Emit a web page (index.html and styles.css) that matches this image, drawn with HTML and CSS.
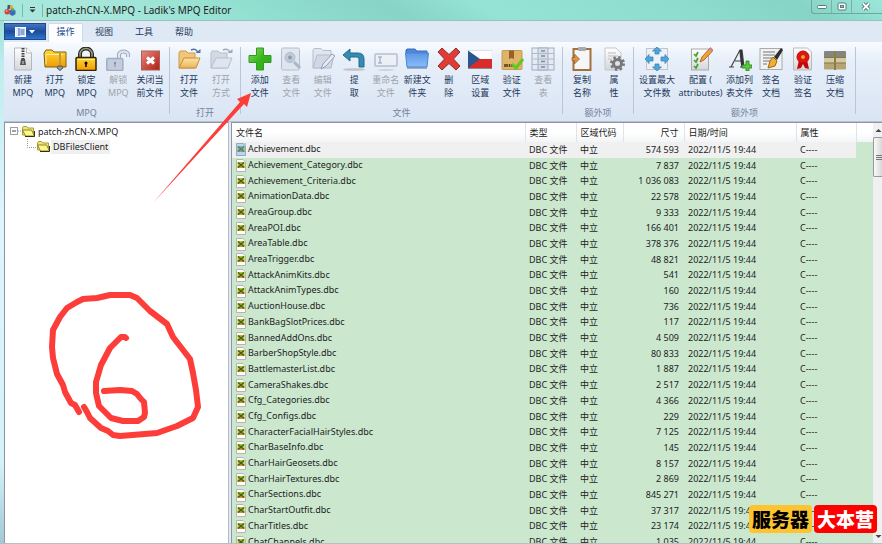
FILE: index.html
```html
<!DOCTYPE html>
<html lang="zh-CN">
<head>
<meta charset="utf-8">
<title>patch-zhCN-X.MPQ - Ladik's MPQ Editor</title>
<link rel="stylesheet" href="styles.css">
</head>
<body>
<svg class="defs" aria-hidden="true">
  <defs>
    <linearGradient id="gold" x1="0" y1="0" x2="0" y2="1"><stop offset="0" stop-color="#ffd83c"/><stop offset="1" stop-color="#f09a00"/></linearGradient>
    <linearGradient id="paper" x1="0" y1="0" x2="0" y2="1"><stop offset="0" stop-color="#fff"/><stop offset="1" stop-color="#d4d6da"/></linearGradient>
    <linearGradient id="red" x1="0" y1="0" x2="1" y2="1"><stop offset="0" stop-color="#e88a7c"/><stop offset="1" stop-color="#b01c14"/></linearGradient>
    <linearGradient id="blue" x1="0" y1="0" x2="0" y2="1"><stop offset="0" stop-color="#5b96e6"/><stop offset="1" stop-color="#8abcf8"/></linearGradient>
    <linearGradient id="green" x1="0" y1="0" x2="1" y2="1"><stop offset="0" stop-color="#90dc70"/><stop offset=".5" stop-color="#38b81c"/><stop offset="1" stop-color="#2ca810"/></linearGradient>
    <linearGradient id="tan" x1="0" y1="0" x2="0" y2="1"><stop offset="0" stop-color="#fbe3a4"/><stop offset="1" stop-color="#eab55c"/></linearGradient>
    <symbol id="dbc" viewBox="0 0 10 13"><path d="M.5.5h6.500l2.500 2.500v9.500h-9z" fill="#fff" stroke="#b9b3a8"/><path d="M1.500 3h7v6h-7z" fill="#b5bf28"/><path d="M1.500 7h7v2h-7z" fill="#d8922c"/><path d="M2 3.500l6 5M8 3.500l-6 5" stroke="#35631c" stroke-width="1.300"/></symbol>
    <symbol id="folder" viewBox="0 0 13 11"><path d="M.5 9V2l1-1.500h3L6 2h5.500v7z" fill="#f2e66e" stroke="#a39d3d"/><path d="M.5 4h9l3 6h-9z" fill="#fff68c" stroke="#8a8530"/><path d="M3 10.500h9.500V5" fill="none" stroke="#33310c"/></symbol>
  </defs>
</svg>

<div class="window">
  <header class="titlebar">
    <svg class="logo" viewBox="0 0 13 13"><path d="M4 1.500l3-1 3 2-1 4-4-1z" fill="#e2ab38"/><path d="M4 1l2.500 0v4l-3 1z" fill="#36558e"/><circle cx="3.500" cy="8.500" r="3" fill="#d9413a"/><path d="M6 7l3-1.500 3.500 1.500v4L9 13l-3-2z" fill="#3d6db9"/><path d="M8 4.500l3 .5v3l-3-1z" fill="#53a846"/><circle cx="2.800" cy="7.500" r="1" fill="#ff9c8c"/></svg>
    <span class="bar"></span>
    <button class="quick" aria-label="自定义快速访问工具栏"><svg viewBox="0 0 7 6"><path d="M1 .5h5" stroke="#333"/><path d="M.5 2.500h6L3.500 5.500z" fill="#333"/></svg></button>
    <span class="bar"></span>
    <h1>patch-zhCN-X.MPQ - Ladik's MPQ Editor</h1>
    <div class="winbuttons">
      <button aria-label="最小化"><svg viewBox="0 0 10 9"><rect x=".5" y="3.500" width="9" height="3" rx="1" fill="#fff" stroke="#557d78"/></svg></button>
      <button aria-label="最大化"><svg viewBox="0 0 10 9"><rect x="1" y="1" width="8" height="7" rx="1" fill="#fff" stroke="#557d78"/><rect x="3.500" y="3.500" width="3" height="2" fill="#8ccfc2" stroke="#557d78"/></svg></button>
      <button aria-label="关闭"><svg viewBox="0 0 10 9"><path d="M2 1.500l6 6M8 1.500l-6 6" stroke="#4e6d6a" stroke-width="3.600"/><path d="M2 1.500l6 6M8 1.500l-6 6" stroke="#fff" stroke-width="1.800"/></svg></button>
    </div>
  </header>

  <nav class="tabs">
    <button class="app" aria-label="菜单"><svg viewBox="0 0 21 10"><rect x=".5" y=".5" width="10" height="9" fill="#dcebff" stroke="#fff"/><path d="M4 1v8M5.500 3h4M5.500 5h4M5.500 7h4" stroke="#3465ae"/><path d="M14 3h6l-3 3.500z" fill="#fff"/></svg></button>
    <button class="tab active">操作</button>
    <button class="tab">视图</button>
    <button class="tab">工具</button>
    <button class="tab">帮助</button>
  </nav>

  <section class="ribbon">
    <div class="group g-mpq">
      <div class="tools">
        <button><svg viewBox="0 0 24 24"><path d="M3.500 1h12l5 5v17h-17z" fill="url(#paper)" stroke="#b4b8bd"/><path d="M15.500 1v5h5" fill="#fff" stroke="#b4b8bd"/><path d="M12 1v13" stroke="#444" stroke-width="3" stroke-dasharray="1.500 1"/><path d="M10 12h4l1 6h-6z" fill="#555"/><path d="M12 14v3" stroke="#ddd"/></svg><span>新建<br>MPQ</span></button>
        <button><svg viewBox="0 0 24 24"><path d="M2 20L1 6l2-3h6l2 2h12v15z" fill="url(#gold)" stroke="#7f6210"/><path d="M3 7.500h17M3 7.500v10" stroke="#ffef8b" fill="none"/><path d="M17 5v14" stroke="#745608" stroke-width="2"/><path d="M17 5v14" stroke="#ffe574"/><path d="M15 19h4l1 2-3 2.500L14 21z" fill="#9b9b8d" stroke="#555"/></svg><span>打开<br>MPQ</span></button>
        <button><svg viewBox="0 0 24 24"><path d="M6 12V7a6 5.500 0 0 1 12 0v5" fill="none" stroke="#29291f" stroke-width="4"/><path d="M6 12V7a6 5.500 0 0 1 12 0v5" fill="none" stroke="#999987" stroke-width="1.500"/><rect x="2" y="10.500" width="20" height="13" rx="1" fill="url(#gold)" stroke="#302204" stroke-width="1.500"/><path d="M3.500 12.500h17" stroke="#fff27c"/><circle cx="12" cy="16" r="1.500"/><path d="M12 16v4" stroke="#000" stroke-width="1.500"/></svg><span>锁定<br>MPQ</span></button>
        <button disabled><svg viewBox="0 0 24 24"><path d="M13 12V7a5 4.500 0 0 1 9 0v3" fill="none" stroke="#8592a8" stroke-width="4"/><path d="M13 12V7a5 4.500 0 0 1 9 0v3" fill="none" stroke="#dce2ec" stroke-width="2"/><rect x=".8" y="11.500" width="16" height="12" rx="1" fill="#b7c2d4" stroke="#8c99ae" stroke-width="1.500"/><circle cx="9" cy="16" r="1.200" fill="#63728b"/><path d="M9 16v4" stroke="#63728b"/></svg><span>解锁<br>MPQ</span></button>
        <button><svg viewBox="0 0 24 24"><rect x="3.500" y="4" width="18" height="19" fill="url(#red)" stroke="#a96058"/><path d="M9 10.500l7 6M16 10.500l-7 6" stroke="#fff" stroke-width="3"/></svg><span>关闭当<br>前文件</span></button>
      </div>
      <h2>MPQ</h2>
    </div>
    <div class="group g-open">
      <div class="tools">
        <button><svg viewBox="0 0 24 24"><path d="M2 21V6l1-2h6l2 2h7v15z" fill="#efc67b" stroke="#d19b42"/><path d="M2 21L7 11h16l-4 10z" fill="url(#tan)" stroke="#c98e32"/><path d="M14 3c4-2 6 0 7 3" fill="none" stroke="#55779e" stroke-width="1.500"/><path d="M18.500 6h5v-4z" fill="#55779e"/></svg><span>打开<br>文件</span></button>
        <button disabled><svg viewBox="0 0 24 24"><path d="M2 21V6l1-2h6l2 2h7v15z" fill="#cbd2de" stroke="#a5afbf"/><path d="M2 21L7 11h16l-4 10z" fill="#dde3ec" stroke="#a5afbf"/><path d="M14 3c4-2 6 0 7 3" fill="none" stroke="#8390a5" stroke-width="1.500"/><path d="M18.500 6h5v-4z" fill="#8390a5"/></svg><span>打开<br>方式</span></button>
      </div>
      <h2>打开</h2>
    </div>
    <div class="group g-file">
      <div class="tools">
        <button><svg viewBox="0 0 24 24"><path d="M8.500 1h7v7.500H23v7h-7.500V23h-7v-7.500H1v-7h7.500z" fill="url(#green)" stroke="#329a24"/></svg><span>添加<br>文件</span></button>
        <button disabled><svg viewBox="0 0 24 24"><rect x="2.500" y="1" width="18" height="22" rx="1.500" fill="#dde3ec" stroke="#a4aec0"/><circle cx="11" cy="10.500" r="5" fill="#b3bdcd" stroke="#9ca8ba"/><circle cx="11" cy="10.500" r="2" fill="#707e96"/><path d="M15 15l6 6" stroke="#98a4b8" stroke-width="3"/></svg><span>查看<br>文件</span></button>
        <button disabled><svg viewBox="0 0 24 24"><path d="M2 21V3l1-1.500h7l2 2h8v17z" fill="#dce2eb" stroke="#a4aec0"/><path d="M2 21L6 8h17l-3 13z" fill="#cad1de" stroke="#a4aec0"/><path d="M10 22l2-5L21 7l3 2-9 10z" fill="#e8ecf2" stroke="#78869e"/></svg><span>编辑<br>文件</span></button>
        <button><svg viewBox="0 0 24 24"><ellipse cx="12" cy="22.500" rx="11" ry="1.300" fill="#bfc3c9"/><path d="M8 2v4h8q6 0 6 6v8h-5v-8q0-2-2-2H8v4L1 8z" fill="#348db0" stroke="#246b8a"/></svg><span>提<br>取</span></button>
        <button disabled><svg viewBox="0 0 24 24"><ellipse cx="12" cy="23" rx="8" ry="1" fill="#c0cedc"/><rect x="1" y="7" width="22" height="12" rx="1" fill="#edf1f7" stroke="#a3afc2" stroke-width="1.500"/><path d="M4 10h4M6 10v6M4 16h4" stroke="#76859c"/></svg><span>重命名<br>文件</span></button>
        <button><svg viewBox="0 0 24 24"><path d="M1 8V3l1-1h8l2 2h10v4z" fill="#4e87d9" stroke="#3a6fb9"/><path d="M.5 6h23L22 20H2z" fill="url(#blue)" stroke="#4b85d0"/><path d="M2 21h20" stroke="#4e719e"/></svg><span>新建文<br>件夹</span></button>
        <button><svg viewBox="0 0 24 24"><path d="M1 5l4-4 7 6.500L19 1l4 4-6.500 7L23 19l-4 4-7-6.500L5 23l-4-4 6.500-7z" fill="#e03b35" stroke="#8d3029"/></svg><span>删<br>除</span></button>
        <button><svg viewBox="0 0 24 24"><path d="M0 3.500h24v9H0z" fill="#fff" stroke="#c8c8c8" stroke-width=".5"/><path d="M0 12h24v9H0z" fill="#d92b2a"/><path d="M0 3.500L12 12 0 21z" fill="#285690"/><path d="M0 21.500h24" stroke="#8a8a8a"/></svg><span>区域<br>设置</span></button>
        <button><svg viewBox="0 0 24 24"><rect x="2" y="3.500" width="20" height="19" rx="1" fill="#deb469" stroke="#c49b50"/><path d="M9 3.500h5V12l-2.500-1L9 12z" fill="#94602b"/><path d="M5 17v3M7 17v3M9.500 17v3M12 17v3" stroke="#4e3919" stroke-width="1.500"/><path d="M12 17l4 4 7-9" fill="none" stroke="#63c623" stroke-width="3"/></svg><span>验证<br>文件</span></button>
        <button disabled><svg viewBox="0 0 24 24"><rect x="1" y="1" width="22" height="22" fill="#e7ebf2" stroke="#8997ad"/><path d="M7 1h10v22H7z" fill="#d1d8e3" stroke="#8997ad"/><path d="M1 6.500h22M1 12h22M1 17.500h22" stroke="#9ba8bb"/><path d="M10 4h4M10 9h4M10 14.500h4M10 20h4" stroke="#586a86" stroke-width="1.500"/></svg><span>查看<br>表</span></button>
      </div>
      <h2>文件</h2>
    </div>
    <div class="group g-copy">
      <div class="tools">
        <button><svg viewBox="0 0 24 24"><rect x="3.500" y="2" width="17" height="21" fill="#f5f6f8" stroke="#a3713d" stroke-width="2"/><rect x="8" y="0" width="8" height="4" rx="1" fill="#a7aab0"/><path d="M2 10.500h2.500v-3.500l5 5-5 5v-3.500H2z" fill="#dc9247" stroke="#935a24" stroke-width=".7"/></svg><span>复制<br>名称</span></button>
        <button><svg viewBox="0 0 24 24"><path d="M3 1h11l5 5v17H3z" fill="url(#paper)" stroke="#c5c7ca"/><path d="M6 6h8M6 9h10M6 12h4" stroke="#bbb"/><circle cx="15.500" cy="16.500" r="4" fill="none" stroke="#77797d" stroke-width="3"/><circle cx="15.500" cy="16.500" r="6" fill="none" stroke="#77797d" stroke-width="3" stroke-dasharray="2.350 2.360"/></svg><span>属<br>性</span></button>
      </div>
      <h2>额外项</h2>
    </div>
    <div class="group g-extra">
      <div class="tools">
        <button><svg viewBox="0 0 24 24"><rect x="1.500" y="1.500" width="21" height="21" fill="#edf0f5" stroke="#bfc4ce"/><path d="M12 0l4.500 4h-2.500v3h-4V4H7.500zM12 24l4.500-4h-2.500v-3h-4v3H7.500zM0 12l4-4.500V10h4v4H4v2.500zM24 12l-4-4.500V10h-4v4h4v2.500z" fill="#4da5dd" stroke="#2d80b8" stroke-width=".7"/></svg><span>设置最大<br>文件数</span></button>
        <button><svg viewBox="0 0 24 24"><rect x="2.500" y="2" width="17" height="21" fill="url(#paper)" stroke="#aaa"/><path d="M5 7l2 2 2-4M5 13l2 2 2-4M5 19l2 2 2-4" fill="none" stroke="#47a12e" stroke-width="1.700"/><path d="M11 15l2-5L21 1l3 2.500L15 13z" fill="#f1a238" stroke="#b66f20"/><path d="M20 2l1.500-2L24 2.500 22.500 4.500z" fill="#c87fb4"/></svg><span>配置 (<br>attributes)</span></button>
        <button><svg viewBox="0 0 24 24"><path d="M3 20L12 3h2l2 17M7 14h8M1 20h5M12 20h6" fill="none" stroke="#444" stroke-width="1.200"/><path d="M12.500 3l2 16.500" stroke="#333" stroke-width="2.600"/><path d="M18 14h3v4h3v3h-3v3h-3v-3h-4v-3h4z" fill="#5bc83d" stroke="#258218" stroke-width=".8"/></svg><span>添加列<br>表文件</span></button>
        <button><svg viewBox="0 0 24 24"><rect x="1" y="1.500" width="22" height="21" fill="#f0f1f2" stroke="#aaa"/><path d="M4 5h12M4 8h12M4 11h9M4 14h7M4 17h4" stroke="#777"/><path d="M22 1l2 2-6 10-3-3z" fill="#2c2e32"/><path d="M14 10l4 4-2 5-7 2 2-7z" fill="#efb12f" stroke="#9b6815"/></svg><span>签名<br>文档</span></button>
        <button><svg viewBox="0 0 24 24"><path d="M2.500 1h14l4 4v18h-18z" fill="url(#paper)" stroke="#bbb"/><path d="M8 13l-2 9 4-1 2-4 2 4 4 1-2-9z" fill="#c40808"/><circle cx="12" cy="10" r="6" fill="#e41414" stroke="#bf0a0a"/><circle cx="12" cy="10" r="2.500" fill="#f6a21f" stroke="#b3200f"/></svg><span>验证<br>签名</span></button>
        <button><svg viewBox="0 0 24 24"><rect x="1" y="4" width="22" height="7" rx="1" fill="#85857e"/><rect x="1" y="10" width="22" height="7" fill="#d5ca9a"/><rect x="1" y="16" width="22" height="6.500" rx="1" fill="#b5a474"/><path d="M1 10.500h22M1 16h22" stroke="#7d775c"/><path d="M12 4v19" stroke="#8f7c48" stroke-width="2"/></svg><span>压缩<br>文档</span></button>
      </div>
      <h2>额外项</h2>
    </div>
  </section>

  <main class="content">
    <aside class="tree">
      <div class="node"><svg class="toggle" viewBox="0 0 12 9"><rect x=".5" y=".5" width="7" height="7" fill="#fff" stroke="#9aa0a8"/><path d="M2 4h4" stroke="#445"/><path d="M8 4h4" stroke="#999" stroke-dasharray="1 1"/></svg><svg class="folder"><use href="#folder"/></svg><span>patch-zhCN-X.MPQ</span></div>
      <div class="node child"><svg class="branch" viewBox="0 0 10 15"><path d="M.5 0v8.500H10" fill="none" stroke="#999" stroke-dasharray="1 1"/></svg><svg class="folder"><use href="#folder"/></svg><span class="current">DBFilesClient</span></div>
    </aside>
    <div class="list">
      <table>
        <colgroup><col class="c-name"><col class="c-type"><col class="c-locale"><col class="c-size"><col class="c-date"><col class="c-attr"><col class="c-rest"></colgroup>
        <thead><tr><th>文件名</th><th>类型</th><th>区域代码</th><th class="num">尺寸</th><th>日期/时间</th><th>属性</th><th class="rest"></th></tr></thead>
        <tbody>
          <tr class="selected"><td><svg><use href="#dbc"/><rect width="10" height="13" fill="#5fa3e6" opacity=".45"/></svg>Achievement.dbc</td><td>DBC 文件</td><td>中立</td><td class="num">574 593</td><td>2022/11/5 19:44</td><td>C----</td><td class="rest"></td></tr>
          <tr><td><svg><use href="#dbc"/></svg>Achievement_Category.dbc</td><td>DBC 文件</td><td>中立</td><td class="num">7 837</td><td>2022/11/5 19:44</td><td>C----</td><td></td></tr>
          <tr><td><svg><use href="#dbc"/></svg>Achievement_Criteria.dbc</td><td>DBC 文件</td><td>中立</td><td class="num">1 036 083</td><td>2022/11/5 19:44</td><td>C----</td><td></td></tr>
          <tr><td><svg><use href="#dbc"/></svg>AnimationData.dbc</td><td>DBC 文件</td><td>中立</td><td class="num">22 578</td><td>2022/11/5 19:44</td><td>C----</td><td></td></tr>
          <tr><td><svg><use href="#dbc"/></svg>AreaGroup.dbc</td><td>DBC 文件</td><td>中立</td><td class="num">9 333</td><td>2022/11/5 19:44</td><td>C----</td><td></td></tr>
          <tr><td><svg><use href="#dbc"/></svg>AreaPOI.dbc</td><td>DBC 文件</td><td>中立</td><td class="num">166 401</td><td>2022/11/5 19:44</td><td>C----</td><td></td></tr>
          <tr><td><svg><use href="#dbc"/></svg>AreaTable.dbc</td><td>DBC 文件</td><td>中立</td><td class="num">378 376</td><td>2022/11/5 19:44</td><td>C----</td><td></td></tr>
          <tr><td><svg><use href="#dbc"/></svg>AreaTrigger.dbc</td><td>DBC 文件</td><td>中立</td><td class="num">48 821</td><td>2022/11/5 19:44</td><td>C----</td><td></td></tr>
          <tr><td><svg><use href="#dbc"/></svg>AttackAnimKits.dbc</td><td>DBC 文件</td><td>中立</td><td class="num">541</td><td>2022/11/5 19:44</td><td>C----</td><td></td></tr>
          <tr><td><svg><use href="#dbc"/></svg>AttackAnimTypes.dbc</td><td>DBC 文件</td><td>中立</td><td class="num">160</td><td>2022/11/5 19:44</td><td>C----</td><td></td></tr>
          <tr><td><svg><use href="#dbc"/></svg>AuctionHouse.dbc</td><td>DBC 文件</td><td>中立</td><td class="num">736</td><td>2022/11/5 19:44</td><td>C----</td><td></td></tr>
          <tr><td><svg><use href="#dbc"/></svg>BankBagSlotPrices.dbc</td><td>DBC 文件</td><td>中立</td><td class="num">117</td><td>2022/11/5 19:44</td><td>C----</td><td></td></tr>
          <tr><td><svg><use href="#dbc"/></svg>BannedAddOns.dbc</td><td>DBC 文件</td><td>中立</td><td class="num">4 509</td><td>2022/11/5 19:44</td><td>C----</td><td></td></tr>
          <tr><td><svg><use href="#dbc"/></svg>BarberShopStyle.dbc</td><td>DBC 文件</td><td>中立</td><td class="num">80 833</td><td>2022/11/5 19:44</td><td>C----</td><td></td></tr>
          <tr><td><svg><use href="#dbc"/></svg>BattlemasterList.dbc</td><td>DBC 文件</td><td>中立</td><td class="num">1 887</td><td>2022/11/5 19:44</td><td>C----</td><td></td></tr>
          <tr><td><svg><use href="#dbc"/></svg>CameraShakes.dbc</td><td>DBC 文件</td><td>中立</td><td class="num">2 517</td><td>2022/11/5 19:44</td><td>C----</td><td></td></tr>
          <tr><td><svg><use href="#dbc"/></svg>Cfg_Categories.dbc</td><td>DBC 文件</td><td>中立</td><td class="num">4 366</td><td>2022/11/5 19:44</td><td>C----</td><td></td></tr>
          <tr><td><svg><use href="#dbc"/></svg>Cfg_Configs.dbc</td><td>DBC 文件</td><td>中立</td><td class="num">229</td><td>2022/11/5 19:44</td><td>C----</td><td></td></tr>
          <tr><td><svg><use href="#dbc"/></svg>CharacterFacialHairStyles.dbc</td><td>DBC 文件</td><td>中立</td><td class="num">7 125</td><td>2022/11/5 19:44</td><td>C----</td><td></td></tr>
          <tr><td><svg><use href="#dbc"/></svg>CharBaseInfo.dbc</td><td>DBC 文件</td><td>中立</td><td class="num">145</td><td>2022/11/5 19:44</td><td>C----</td><td></td></tr>
          <tr><td><svg><use href="#dbc"/></svg>CharHairGeosets.dbc</td><td>DBC 文件</td><td>中立</td><td class="num">8 157</td><td>2022/11/5 19:44</td><td>C----</td><td></td></tr>
          <tr><td><svg><use href="#dbc"/></svg>CharHairTextures.dbc</td><td>DBC 文件</td><td>中立</td><td class="num">2 869</td><td>2022/11/5 19:44</td><td>C----</td><td></td></tr>
          <tr><td><svg><use href="#dbc"/></svg>CharSections.dbc</td><td>DBC 文件</td><td>中立</td><td class="num">845 271</td><td>2022/11/5 19:44</td><td>C----</td><td></td></tr>
          <tr><td><svg><use href="#dbc"/></svg>CharStartOutfit.dbc</td><td>DBC 文件</td><td>中立</td><td class="num">37 317</td><td>2022/11/5 19:44</td><td>C----</td><td></td></tr>
          <tr><td><svg><use href="#dbc"/></svg>CharTitles.dbc</td><td>DBC 文件</td><td>中立</td><td class="num">23 174</td><td>2022/11/5 19:44</td><td>C----</td><td></td></tr>
          <tr><td><svg><use href="#dbc"/></svg>ChatChannels.dbc</td><td>DBC 文件</td><td>中立</td><td class="num">1 035</td><td>2022/11/5 19:44</td><td>C----</td><td></td></tr>
        </tbody>
      </table>
    </div>
    <div class="scrollbar">
      <svg class="arrow" viewBox="0 0 9 14"><path d="M2.500 9L5.500 6l3 3z" fill="#444"/></svg>
      <div class="thumb"><i></i><i></i><i></i></div>
      <svg class="arrow last" viewBox="0 0 9 14"><path d="M2.500 6h6l-3 3z" fill="#444"/></svg>
    </div>
  </main>
</div>

<svg class="marks" viewBox="0 0 882 544" aria-hidden="true">
  <path d="M153 203L240 102l-3-3 14-6-4 14-3-3z" fill="#fd3d39"/>
  <path d="M79 412L75 405 71 403 65 392 63 385 57 374 53 358 52 347 53 330 60 317 67 308 77 302 83 299 97 298 110 295H130L137 298 150 311 167 324 173 337 190 359 193 373 196 390 198 407 193 418 177 426 157 433 120 436 113 435 108 431 101 428 90 418 87 412 84 407M126 338L125 337 121 337 110 348 101 365 96 382V393L99 406 111 418 123 421H138L144 417 145 413 144 402 141 399 137 394 132 391 120 390 104 391" fill="none" stroke="#fd3d39" stroke-width="6" stroke-linecap="round" stroke-linejoin="round"/>
</svg>
<div class="watermark"><span class="yellow">服务器</span><span class="crimson">大本营</span></div>
</body>
</html>
```
FILE: styles.css
```css
* { box-sizing: border-box; }
html, body { height: 100%; margin: 0; }
body {
  position: relative;
  overflow: hidden;
  background: #fff;
  color: #222;
  font: 9px/12px "Noto Sans", "Noto Sans CJK SC", sans-serif;
}
button {
  margin: 0;
  padding: 0;
  border: 0;
  background: none;
  color: inherit;
  font: inherit;
}
svg { display: block; flex: none; }
.defs { position: absolute; width: 0; height: 0; }

.window {
  display: flex;
  flex-direction: column;
  height: 100%;
  padding-left: 4px;
  border-bottom: 1px solid #b8bfc0;
  background: linear-gradient(#8edccb, #c0ecf0 12%, #def5fb 40%, #d4f2f9 85%, #a4c8d6);
}

.titlebar {
  display: flex;
  align-items: center;
  gap: 6px;
  height: 21px;
  margin-left: -4px;
  padding-left: 4px;
  border-bottom: 1px solid #97c3bf;
  background: linear-gradient(30deg, #a8e8dc 0 12%, #91dfd0 30%, #88d4c7 45%, #95e3d5 55%, #8fddcf 75%, #86d4c6 90%, #9ce6da);
}
.logo { width: 12px; height: 12px; }
.bar { width: 1px; height: 13px; background: #7ab8ae; }
.quick svg { width: 7px; height: 6px; }
h1 { margin: 0 auto 0 -3px; color: #222; font-size: 10px; font-weight: 400; line-height: 20px; }
.winbuttons { display: flex; align-self: flex-start; height: 14px; border: 1px solid #6da79f; border-width: 0 0 1px 1px; border-radius: 0 0 0 3px; }
.winbuttons button { display: grid; place-items: center; width: 20px; height: 13px; border-right: 1px solid #78b3aa; }
.winbuttons button:last-child { width: 30px; border: 0; padding-right: 3px; }
.winbuttons svg { width: 10px; height: 9px; }

.tabs { display: flex; align-items: flex-end; height: 21px; background: #dfe8f5; color: #1e395b; }
.app { display: grid; place-items: center; align-self: center; width: 42px; height: 17px; border: 1px solid #1c4a8c; background: linear-gradient(#4077c0, #1c4c9b 50%, #2f75cc); }
.app svg { width: 21px; height: 10px; }
.tab { width: 40px; height: 19px; padding-bottom: 2px; }
.tab.active { width: 35px; margin: 0 1px 0 2px; border: 1px solid #cfd9e8; border-bottom: 0; border-radius: 2px 2px 0 0; background: #fbfdff; color: #1c4a8c; }

.ribbon {
  display: flex;
  height: 80px;
  border-bottom: 1px solid #b5c2d4;
  background: linear-gradient(#f8fbff, #e6eef9 25%, #dae5f4);
  color: #1e395b;
}
.group { position: relative; display: flex; flex-direction: column; padding: 5px 4px 0 3px; }
.group::after { content: ""; position: absolute; top: 5px; right: 0; bottom: 7px; width: 1px; background: #b8c6da; }
.g-mpq { width: 166px; }
.g-open { width: 71px; }
.g-file { width: 322px; }
.g-copy { width: 71px; }
.g-extra { width: 222px; }
.tools { display: grid; grid-auto-flow: column; grid-auto-columns: 1fr; }
.g-extra .tools { grid-template-columns: 40px 47px 31px 32px 32px 32px; }
.tools button { display: flex; flex-direction: column; align-items: center; gap: 2px; line-height: 13px; white-space: nowrap; }
.tools button:disabled { color: #a0a4aa; }
.tools button:disabled svg { opacity: .75; }
.tools svg { width: 24px; height: 24px; }
h2 { margin: 8px 0 0; color: #73839b; font-size: 9px; font-weight: 400; line-height: 12px; text-align: center; }

.content { display: flex; flex: 1; min-height: 0; border-left: 1px solid #8d96a2; background: #e4eaf3; }
.tree { flex: none; width: 224px; padding: 1px 0 0 5px; border-top: 1px solid #8e96a4; border-right: 1px solid #b5b9c6; background: #fff; }
.node { display: flex; align-items: center; height: 15px; color: #222; font-size: 9px; }
.node span { margin-left: 1px; padding: 0 2px; line-height: 14px; }
.current { background: #f0f0f0; }
.toggle { width: 12px; height: 9px; }
.folder { width: 13px; height: 11px; }
.child { padding-left: 17px; }
.branch { width: 10px; height: 15px; }

.list { flex: 1; min-width: 0; margin-left: 2px; overflow: hidden; border: solid #8e96a4; border-width: 1px 0 0 1px; background: #cbe8cf; }
table { width: 100%; height: calc(100% + 7px); border-collapse: collapse; table-layout: fixed; }
.c-name { width: 293px; }
.c-type { width: 51px; }
.c-locale { width: 47px; }
.c-size { width: 61px; }
.c-date { width: 112px; }
.c-attr { width: 60px; }
th, td { padding: 0 0 0 4px; overflow: hidden; font-weight: 400; line-height: 12px; text-align: left; white-space: nowrap; }
th { height: 19px; background: linear-gradient(#fff 50%, #f2f4f6); border-right: 1px solid #e0e4e8; }
th.rest { border-right: 0; }
td { height: 15px; }
td svg { display: inline-block; width: 10px; height: 13px; margin-right: 2px; vertical-align: middle; }
th.num, td.num { padding: 0 5px 0 0; text-align: right; }
.selected { background: #f0f0f0; }
.selected .rest { background: #cbe8cf; }

.scrollbar { display: flex; flex: none; flex-direction: column; width: 9px; border-top: 1px solid #8e96a4; background: #f0f0f0; }
.arrow { width: 9px; height: 14px; }
.arrow.last { margin-top: auto; }
.thumb { display: flex; flex-direction: column; align-items: flex-end; justify-content: center; gap: 1px; height: 40px; border: 1px solid #999; border-right: 0; border-radius: 2px 0 0 2px; background: linear-gradient(90deg, #fafafa, #d8d8d8); }
.thumb i { width: 6px; height: 1px; background: #777; }

.marks { position: absolute; top: 0; left: 0; width: 882px; height: 544px; pointer-events: none; }
.watermark { position: absolute; right: 5px; bottom: 11px; display: flex; gap: 2px; font: 900 19px/28px "Noto Sans CJK SC", sans-serif; }
.watermark span { padding: 0 3px; border-radius: 4px; }
.yellow { background: #fdc42f; color: #000; }
.crimson { background: #fe0000; color: #fff; }
```
